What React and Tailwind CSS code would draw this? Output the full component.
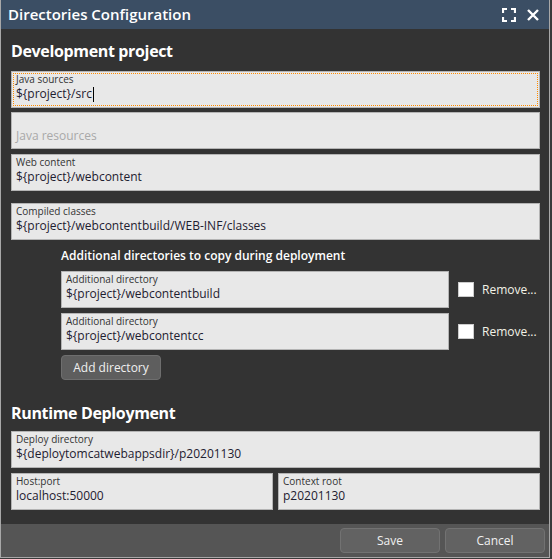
import React from 'react';

const font = { fontFamily: '"Open Sans", "Noto Sans", sans-serif' };

const Field = ({ label, value, placeholder, focused, className = '' }) => (
  <div
    className={`h-[37px] border border-[#b4b4b4] bg-[#e8e8e8] relative ${className}`}
  >
    {focused && (
      <div className="absolute inset-[1px] border border-dotted border-[#ff8c00] pointer-events-none" />
    )}
    {placeholder ? (
      <div className="px-[4px] pt-[15px] text-[12px] leading-[16px] text-[#a9a9a9]">{placeholder}</div>
    ) : (
      <div className="px-[4px] pt-[1px]">
        <div className="text-[10px] leading-[12px] text-[#333]">{label}</div>
        <div className="mt-[1px] text-[12px] leading-[16px] text-[#1e2030] flex items-center">
          {value}
          {focused && <span className="inline-block w-px h-[15px] bg-black ml-px" />}
        </div>
      </div>
    )}
  </div>
);

const AdditionalRow = ({ value, className = '' }) => (
  <div className={`flex items-center ${className}`}>
    <Field label="Additional directory" value={value} className="w-[388px]" />
    <div className="ml-[9px] w-[16px] h-[15px] bg-white border border-[#ccc]" />
    <span className="ml-[8px] text-[12px] text-[#f2f2e6]">Remove...</span>
  </div>
);

export default function App() {
  return (
    <div className="w-[552px] h-[559px] bg-[#3a3a3a]" style={font}>
      <div className="w-[550px] h-[558px] flex flex-col border-l border-r border-b border-[#a8a8a8] bg-[#333333]">
        <div className="h-[29px] shrink-0 bg-[#3b4e64] flex items-center pl-[7px] pr-[10px]">
          <span className="text-[15px] font-semibold text-white">Directories Configuration</span>
          <div className="ml-auto flex items-center gap-[11px]">
            <svg width="14" height="14" viewBox="0 0 14 14" fill="none" stroke="white" strokeWidth="2.2">
              <path d="M1 5V1h4M9 1h4v4M13 9v4H9M5 13H1V9" />
            </svg>
            <svg width="12" height="12" viewBox="0 0 12 12" fill="none" stroke="white" strokeWidth="2.4">
              <path d="M1 1l10 10M11 1L1 11" />
            </svg>
          </div>
        </div>
        <div className="flex-1 flex flex-col pl-[10px] pr-[9px]">
          <div className="mt-[10px] text-[16px] leading-[24px] font-bold text-white tracking-[-0.35px]">Development project</div>
          <Field label="Java sources" value="${project}/src" focused className="mt-[8px]" />
          <Field placeholder="Java resources" className="mt-[4px]" />
          <Field label="Web content" value="${project}/webcontent" className="mt-[5px]" />
          <Field label="Compiled classes" value="${project}/webcontentbuild/WEB-INF/classes" className="mt-[12px]" />
          <div className="pl-[50px] flex flex-col">
            <div className="mt-[7px] text-[12px] leading-[17px] font-semibold text-white">
              Additional directories to copy during deployment
            </div>
            <AdditionalRow value="${project}/webcontentbuild" className="mt-[7px]" />
            <AdditionalRow value="${project}/webcontentcc" className="mt-[5px]" />
            <button className="mt-[5px] w-[100px] h-[25px] rounded-[4px] bg-[#5e5e5e] border border-[#6e6e6e] text-[12px] text-[#f0f0f0]">
              Add directory
            </button>
          </div>
          <div className="mt-[21px] text-[16px] leading-[24px] font-bold text-white tracking-[-0.35px]">Runtime Deployment</div>
          <Field label="Deploy directory" value="${deploytomcatwebappsdir}/p20201130" className="mt-[6px]" />
          <div className="mt-[5px] flex gap-[5px]">
            <Field label="Host:port" value="localhost:50000" className="w-[262px]" />
            <Field label="Context root" value="p20201130" className="flex-1" />
          </div>
        </div>
        <div className="h-[33px] shrink-0 bg-[#555555] flex items-center justify-end gap-[5px] pr-[4px]">
          <button className="w-[100px] h-[25px] rounded-[4px] bg-[#626262] border border-[#727272] text-[12px] text-[#f0f0f0]">
            Save
          </button>
          <button className="w-[100px] h-[25px] rounded-[4px] bg-[#626262] border border-[#727272] text-[12px] text-[#f0f0f0]">
            Cancel
          </button>
        </div>
      </div>
    </div>
  );
}
